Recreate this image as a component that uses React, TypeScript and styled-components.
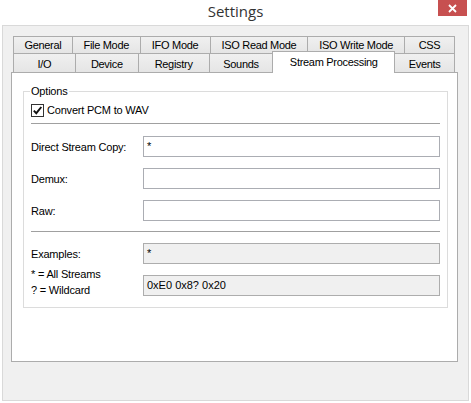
import React from "react";
import styled, { createGlobalStyle } from "styled-components";

const GlobalStyle = createGlobalStyle`
  html, body {
    margin: 0;
    padding: 0;
    background: #ffffff;
  }
  body {
    font-family: "Liberation Sans", Arial, sans-serif;
    font-size: 11px;
    color: #000;
  }
`;

// Window frame
const Window = styled.div`
  width: 471px;
  height: 403px;
  display: flex;
  flex-direction: column;
  background: #ffffff;
  box-sizing: border-box;
`;

const TitleBar = styled.div`
  position: relative;
  height: 25px;
  display: flex;
  align-items: center;
  justify-content: center;
  padding-bottom: 3px;
  box-sizing: border-box;
  font-family: "Open Sans", "Noto Sans", sans-serif;
  font-size: 15px;
  color: #333333;
`;

const CloseButton = styled.div`
  position: absolute;
  top: 0;
  right: 4px;
  width: 29px;
  height: 16px;
  background: #c75050;
  display: flex;
  align-items: center;
  justify-content: center;
`;

const Client = styled.div`
  flex: 1;
  margin: 0 2px 2px 2px;
  border: 1px solid #d9d9d9;
  background: #f0f0f0;
  padding: 10px 0 0 8px;
  display: flex;
  flex-direction: column;
`;

// Tabs
const TabStrip = styled.div`
  margin-left: 2px;
  width: 442px;
  display: flex;
  flex-direction: column;
`;

const TabRow = styled.div<{ $front?: boolean }>`
  display: flex;
  height: ${(p) => (p.$front ? "19px" : "17px")};
  align-items: flex-end;
`;

const Tab = styled.div<{ $w: number; $front?: boolean; $selected?: boolean }>`
  width: ${(p) => p.$w + 1}px;
  margin-left: -1px;
  &:first-child {
    margin-left: 0;
  }
  box-sizing: border-box;
  height: ${(p) => (p.$selected ? 22 : p.$front ? 19 : 17)}px;
  border: 1px solid #acacac;
  border-bottom: none;
  background: ${(p) =>
    p.$selected ? "#ffffff" : "linear-gradient(#f0f0f0, #e5e5e5)"};
  display: flex;
  align-items: ${(p) => (p.$selected ? "flex-start" : "center")};
  justify-content: center;
  padding-top: ${(p) => (p.$selected ? 4 : p.$front ? 2 : 0)}px;
  letter-spacing: -0.3px;
  white-space: nowrap;
  position: relative;
  z-index: ${(p) => (p.$selected ? 2 : 1)};
  margin-bottom: ${(p) => (p.$selected ? -1 : 0)}px;
`;

const Panel = styled.div`
  width: 447px;
  height: 290px;
  box-sizing: border-box;
  border: 1px solid #acacac;
  background: #ffffff;
  padding: 12px 9px 0 11px;
`;

// Group box
const GroupBox = styled.fieldset`
  margin: 0;
  padding: 0 7px 11px 7px;
  border: 1px solid #dcdcdc;
  min-width: 0;
`;

const Legend = styled.legend`
  padding: 0 1px;
  margin-left: -1px;
  line-height: 13px;
  letter-spacing: -0.2px;
`;

const CheckRow = styled.label`
  display: flex;
  align-items: center;
  gap: 3px;
  margin-top: 5px;
  height: 14px;
  letter-spacing: -0.2px;
`;

const CheckBox = styled.span`
  width: 13px;
  height: 13px;
  box-sizing: border-box;
  border: 1px solid #333333;
  background: #ffffff;
  display: flex;
  align-items: center;
  justify-content: center;
`;

const Separator = styled.div<{ $top: number }>`
  height: 1px;
  background: #a0a0a0;
  margin-top: ${(p) => p.$top}px;
`;

const FieldGrid = styled.div<{ $top: number }>`
  display: grid;
  grid-template-columns: 112px 297px;
  row-gap: 11px;
  align-items: center;
  margin-top: ${(p) => p.$top}px;
`;

const FieldLabel = styled.div`
  letter-spacing: -0.2px;
  line-height: 16px;
`;

// Two-line legend beside the second example box, sits slightly above its centre
const LegendNote = styled(FieldLabel)`
  align-self: start;
  height: 21px;
  margin-top: -9px;
`;

const TextBox = styled.div<{ $readOnly?: boolean }>`
  height: 21px;
  box-sizing: border-box;
  border: 1px solid ${(p) => (p.$readOnly ? "#adadad" : "#abadb3")};
  background: ${(p) => (p.$readOnly ? "#f0f0f0" : "#ffffff")};
  padding: 0 3px;
  line-height: 19px;
  white-space: nowrap;
`;

const row1 = [
  { label: "General", w: 59 },
  { label: "File Mode", w: 68 },
  { label: "IFO Mode", w: 70 },
  { label: "ISO Read Mode", w: 98 },
  { label: "ISO Write Mode", w: 97 },
  { label: "CSS", w: 50 },
];

const row2 = [
  { label: "I/O", w: 62 },
  { label: "Device", w: 63 },
  { label: "Registry", w: 71 },
  { label: "Sounds", w: 64 },
  { label: "Stream Processing", w: 122, selected: true },
  { label: "Events", w: 60 },
];

const fields = [
  { label: "Direct Stream Copy:", value: "*" },
  { label: "Demux:", value: "" },
  { label: "Raw:", value: "" },
];

export default function App() {
  return (
    <Window>
      <GlobalStyle />
      <TitleBar>
        Settings
        <CloseButton>
          <svg width="9" height="9" viewBox="0 0 9 9">
            <path
              d="M1 1 L8 8 M8 1 L1 8"
              stroke="#ffffff"
              strokeWidth="1.8"
              fill="none"
            />
          </svg>
        </CloseButton>
      </TitleBar>
      <Client>
        <TabStrip>
          <TabRow>
            {row1.map((t) => (
              <Tab key={t.label} $w={t.w}>
                {t.label}
              </Tab>
            ))}
          </TabRow>
          <TabRow $front>
            {row2.map((t) => (
              <Tab key={t.label} $w={t.w} $front $selected={t.selected}>
                {t.label}
              </Tab>
            ))}
          </TabRow>
        </TabStrip>
        <Panel>
          <GroupBox>
            <Legend>Options</Legend>
            <CheckRow>
              <CheckBox>
                <svg width="11" height="11" viewBox="0 0 11 11">
                  <path
                    d="M1.8 5.6 L4.3 8.2 L9.3 2"
                    stroke="#111111"
                    strokeWidth="1.9"
                    fill="none"
                  />
                </svg>
              </CheckBox>
              Convert PCM to WAV
            </CheckRow>
            <Separator $top={6} />
            <FieldGrid $top={12}>
              {fields.map((f) => (
                <React.Fragment key={f.label}>
                  <FieldLabel>{f.label}</FieldLabel>
                  <TextBox>{f.value}</TextBox>
                </React.Fragment>
              ))}
            </FieldGrid>
            <Separator $top={10} />
            <FieldGrid $top={11}>
              <FieldLabel>Examples:</FieldLabel>
              <TextBox $readOnly>*</TextBox>
              <LegendNote>
                * = All Streams
                <br />? = Wildcard
              </LegendNote>
              <TextBox $readOnly>0xE0 0x8? 0x20</TextBox>
            </FieldGrid>
          </GroupBox>
        </Panel>
      </Client>
    </Window>
  );
}
